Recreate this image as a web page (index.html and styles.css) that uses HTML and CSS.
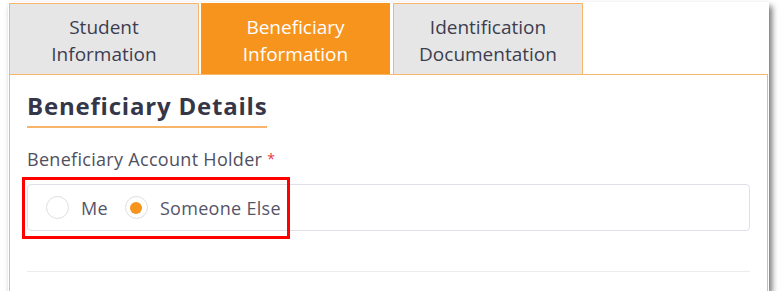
FILE: index.html
```html
<!DOCTYPE html>
<html>
	<head>
		<meta charset="UTF-8">
		<title>Beneficiary Information</title>
		<link rel="stylesheet" href="styles.css">
	</head>
	<body>
		<div class="shot">
			<ul class="tabs">
				<li><a href="javascript:;">Student<br>Information</a></li>
				<li class="focus"><a href="javascript:;">Beneficiary<br>Information</a></li>
				<li><a href="javascript:;">Identification<br>Documentation</a></li>
			</ul>
			<div class="panel">
				<h2>Beneficiary Details</h2>
				<p class="label">Beneficiary Account Holder <span class="req">*</span></p>
				<div class="choice">
					<label class="radio"><span class="dot"></span>Me</label>
					<label class="radio checked"><span class="dot"></span>Someone Else</label>
					<div class="mark"></div>
				</div>
				<div class="line"></div>
			</div>
		</div>
	</body>
</html>
```

FILE: styles.css
```css
body,
ul,
h2,
p {
	margin: 0;
	padding: 0;
}

li {
	list-style: none;
}

body {
	background: #fff;
	font-family: "Open Sans", Lato, sans-serif;
	color: #3d3d50;
}

a {
	text-decoration: none;
}

.shot {
	width: 761px;
	height: 289px;
	margin: 2px 0 0 8px;
	background: #fff;
	box-shadow: 3px 4px 6px rgba(0, 0, 0, 0.55);
	overflow: hidden;
}

/*tabs*/
.tabs {
	display: flex;
	gap: 2px;
	padding: 1px 0 0 1px;
}

.tabs li {
	width: 188px;
	height: 70px;
	border: 1px solid #f7b669;
	border-bottom: 0;
	background: #e6e6e6;
	display: flex;
	align-items: center;
	justify-content: center;
}

.tabs li a {
	color: #3d3d50;
	font-size: 19px;
	line-height: 27px;
	text-align: center;
	padding-top: 3px;
}

.tabs li.focus {
	width: 187px;
	margin-right: 1px;
	background: #f7941e;
	border-color: #f7941e;
}

.tabs li.focus a {
	color: #fff;
}

/*panel*/
.panel {
	margin-left: 1px;
	width: 740px;
	height: 220px;
	border: 1px solid #f7b669;
	border-bottom: 0;
	padding: 16px 0 0 17px;
}

.panel h2 {
	display: inline-block;
	font-size: 24px;
	font-weight: bold;
	letter-spacing: 0.8px;
	color: #363649;
	line-height: 30px;
	padding-bottom: 5px;
	border-bottom: 2px solid #f6b56a;
}

.label {
	margin-top: 20px;
	font-size: 18px;
	letter-spacing: 0.3px;
	line-height: 22px;
	color: #505060;
}

.req {
	color: #e53a3a;
	font-size: 14px;
	vertical-align: top;
}

.choice {
	position: relative;
	margin-top: 14px;
	width: 723px;
	height: 47px;
	border: 1px solid #dde1e7;
	border-radius: 4px;
	display: flex;
	align-items: center;
	padding-left: 18px;
	box-sizing: border-box;
}

.radio {
	display: flex;
	align-items: center;
	gap: 12px;
	font-size: 18px;
	letter-spacing: 0.3px;
	color: #55556a;
	margin-right: 17px;
}

.dot {
	width: 21px;
	height: 21px;
	border: 1px solid #dedede;
	border-radius: 50%;
	display: flex;
	align-items: center;
	justify-content: center;
}

.checked .dot::after {
	content: "";
	width: 12px;
	height: 12px;
	border-radius: 50%;
	background: #f7941e;
}

/* red annotation box */
.mark {
	position: absolute;
	left: -6px;
	top: -8px;
	width: 262px;
	height: 56px;
	border: 3px solid #f00;
}

.line {
	margin-top: 40px;
	width: 723px;
	height: 1px;
	background: #ececec;
}
```
